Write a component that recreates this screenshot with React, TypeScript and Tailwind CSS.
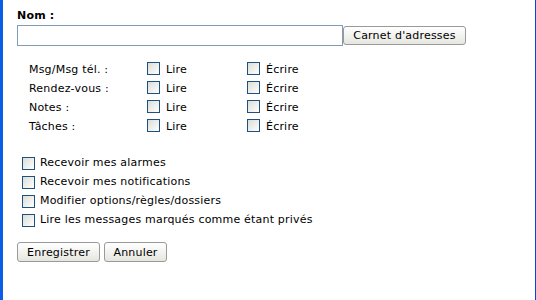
import React from "react";

function Box() {
  return (
    <input
      type="checkbox"
      className="appearance-none m-0 shrink-0 w-[13px] h-[13px] border border-[#1c5180] bg-linear-to-br from-[#dcdcd7] to-white"
    />
  );
}

function Btn({ label, w }: { label: string; w: string }) {
  return (
    <button
      className={`${w} h-[20px] rounded-[3px] border border-[#9a9a9a] bg-linear-to-b from-white to-[#e6e6e0] text-[11px] tracking-[0.2px] leading-none text-black flex items-center justify-center`}
    >
      {label}
    </button>
  );
}

const perms = ["Msg/Msg tél. :", "Rendez-vous :", "Notes :", "Tâches :"];
const opts = [
  "Recevoir mes alarmes",
  "Recevoir mes notifications",
  "Modifier options/règles/dossiers",
  "Lire les messages marqués comme étant privés",
];

export default function App() {
  return (
    <div className="w-[536px] h-[300px] bg-white border-l-[3px] border-l-[#0b5de9] border-r border-r-[#0a3fe0] pl-[14px] pt-[9px] font-['DejaVu_Sans',sans-serif] text-[11px] tracking-[0.2px] text-black overflow-hidden">
      <div className="font-bold leading-[13px]">Nom :</div>
      <div className="flex items-start mt-[3px]">
        <input
          type="text"
          className="w-[326px] h-[21px] border border-[#7f9db9] bg-white outline-none px-1"
        />
        <button className="mt-[1px] w-[123px] h-[19px] rounded-[3px] border border-[#9a9a9a] bg-linear-to-b from-white to-[#e6e6e0] text-[11px] tracking-[0.2px] leading-none flex items-center justify-center">
          Carnet d'adresses
        </button>
      </div>

      <div className="mt-[13px] pl-[12px]">
        {perms.map((p) => (
          <div key={p} className="flex items-center h-[19px]">
            <div className="w-[118px] mt-[4px]">{p}</div>
            <div className="w-[100px] flex items-center gap-[6px]">
              <Box />
              <span className="mt-[4px]">Lire</span>
            </div>
            <div className="flex items-center gap-[6px]">
              <Box />
              <span className="mt-[4px]">Écrire</span>
            </div>
          </div>
        ))}
      </div>

      <div className="mt-[19px] pl-[5px]">
        {opts.map((o) => (
          <div key={o} className="flex items-center h-[19px] gap-[5px]">
            <Box />
            <span>{o}</span>
          </div>
        ))}
      </div>

      <div className="mt-[12px] flex gap-[4px]">
        <Btn label="Enregistrer" w="w-[83px]" />
        <Btn label="Annuler" w="w-[63px]" />
      </div>
    </div>
  );
}
